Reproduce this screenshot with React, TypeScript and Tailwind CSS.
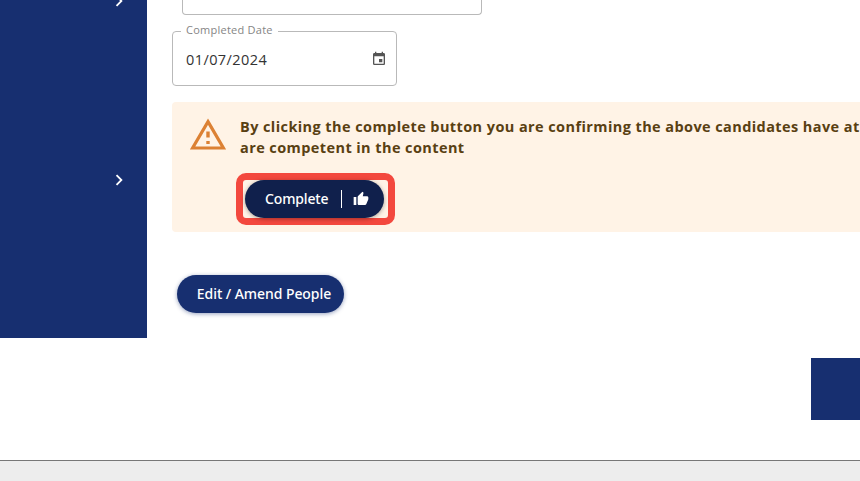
import { MdChevronRight, MdEvent, MdThumbUp } from 'react-icons/md';

export default function App() {
  return (
    <div className="flex h-[481px] w-[860px] flex-col overflow-hidden bg-white font-['Open_Sans',sans-serif]">
      <div className="flex h-[338px] shrink-0">
        <Sidebar />
        <main className="flex min-w-0 flex-1 flex-col pl-[25px]">
          <div className="ml-2.5 h-[15px] w-[300px] shrink-0 rounded-b border border-t-0 border-[#b9b9b9]" />
          <DateField label="Completed Date" value="01/07/2024" />
          <CompleteNotice />
          <button
            type="button"
            className="mt-[43px] ml-[5px] h-[38px] w-[167px] shrink-0 rounded-full bg-[#172f70] pb-px pl-[7px] font-['Noto_Sans',sans-serif] text-[14px] font-medium tracking-[-0.06px] whitespace-nowrap text-white shadow-[0_1px_4px_rgba(23,47,112,0.45)]"
          >
            Edit / Amend People
          </button>
        </main>
      </div>
      <div className="mt-5 h-[62px] w-[49px] shrink-0 self-end bg-[#172f70]" />
      <footer className="mt-10 flex-1 border-t border-[#777777] bg-[#ededed]" />
    </div>
  );
}

function Sidebar() {
  return (
    <aside className="flex w-[147px] shrink-0 flex-col items-end overflow-hidden bg-[#172f70] pr-[17.5px] text-white">
      <MdChevronRight size={22} className="-mt-[10px] shrink-0" />
      <MdChevronRight size={22} className="mt-[157px] shrink-0" />
    </aside>
  );
}

function DateField({ label, value }: { label: string; value: string }) {
  return (
    <div className="mt-2 shrink-0">
      <fieldset className="h-[63px] w-[225px] rounded border border-[#b9b9b9] pl-2">
        <legend className="h-4 px-[5px] text-[11px] leading-[14px] tracking-[0.25px] text-[#858585]">
          {label}
        </legend>
        <div className="flex h-10 items-center justify-between pr-[9px] pl-[5px]">
          <span className="pt-0.5 text-[14.5px] tracking-[0.42px] text-[#333333]">{value}</span>
          <MdEvent size={16} className="text-[#555555]" />
        </div>
      </fieldset>
    </div>
  );
}

function WarningIcon() {
  return (
    <svg viewBox="0 0 36 32" className="mt-4 h-8 w-9 shrink-0" aria-hidden="true">
      <path d="M18 3.6 33.4 30H2.6Z" fill="none" stroke="#dc8134" strokeWidth="3.2" />
      <path d="M16.3 13.5h3.4v6h-3.4zM16.3 23h3.4v3h-3.4z" fill="#dc8134" />
    </svg>
  );
}

function CompleteNotice() {
  return (
    <section className="mt-4 flex h-[130px] shrink-0 rounded-l bg-[#fff3e6] pl-[18px]">
      <WarningIcon />
      <div className="ml-[14px] shrink-0 pt-[14px]">
        <p className="text-[14.5px] leading-[21px] font-bold tracking-[0.41px] whitespace-nowrap text-[#594012]">
          By clicking the complete button you are confirming the above candidates have at
          <br />
          are competent in the content
        </p>
        <div className="mt-[15px] -ml-1 flex h-[52px] w-[159px] items-center rounded-[10px] border-[7px] border-[#f3483e] pl-0.5">
          <button
            type="button"
            className="flex h-[38px] w-[139px] items-center rounded-full bg-[#10204c] pl-5 text-white shadow-[0_1px_4px_rgba(0,0,0,0.35)]"
          >
            <span className="w-[76px] pb-px text-left font-['Noto_Sans',sans-serif] text-[14px] font-medium tracking-[-0.15px]">
              Complete
            </span>
            <span className="h-[18px] w-px bg-white" />
            <MdThumbUp size={16} className="ml-[11px]" />
          </button>
        </div>
      </div>
    </section>
  );
}
